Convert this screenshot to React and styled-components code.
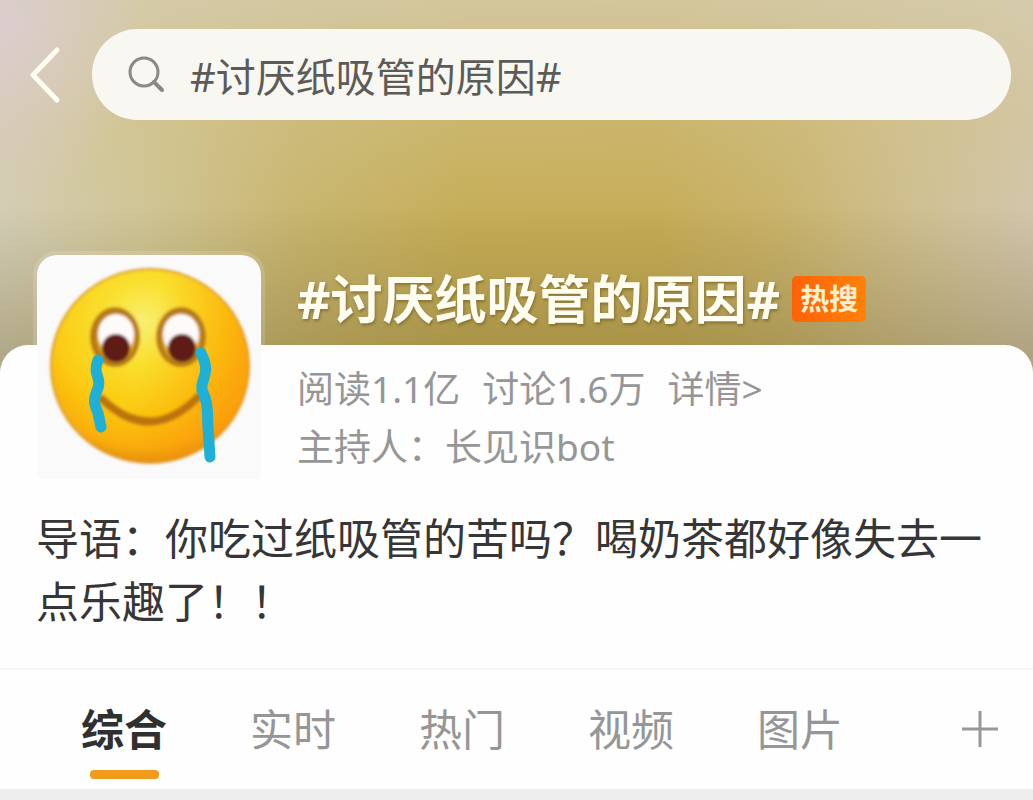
import React, { useState } from 'react'
import styled, { createGlobalStyle } from 'styled-components'

const GlobalStyle = createGlobalStyle`
  * {
    box-sizing: border-box;
  }

  body {
    margin: 0;
    background: #eeeeee;
    font-family: "Noto Sans", "Noto Sans CJK SC", sans-serif;
  }

  button, input {
    font: inherit;
    border: 0;
    padding: 0;
    background: none;
  }
`

const Hero = styled.header`
  display: flex;
  align-items: center;
  padding: 29px 22px 253px 26px;
  background:
    radial-gradient(ellipse 14% 50% at 0% 6%, rgba(221, 206, 216, 0.8), rgba(221, 206, 216, 0) 100%),
    linear-gradient(180deg, rgba(213, 203, 170, 0.85) 0%, rgba(211, 196, 142, 0.4) 32%, rgba(200, 176, 90, 0) 62%),
    linear-gradient(180deg, rgba(110, 95, 40, 0) 55%, rgba(110, 95, 40, 0.34) 95%),
    linear-gradient(90deg, #d4ceb8 0%, #d0c595 14%, #c8b56e 29%, #c5ad56 45%, #c5ac56 64%, #c9b36c 76%, #cfbf90 88%, #d2c6ae 100%);
`

const BackButton = styled.button`
  display: flex;
  margin-right: 28px;
  cursor: pointer;
`

const SearchBox = styled.label`
  display: flex;
  flex: 1;
  align-items: center;
  gap: 24px;
  height: 91px;
  padding: 0 36px;
  border-radius: 46px;
  background: #f9f7f1;
`

const SearchInput = styled.input`
  flex: 1;
  min-width: 0;
  height: 60px;
  font-size: 40px;
  color: #5c5b58;
  outline: none;
`

const Panel = styled.main`
  margin-top: -28px;
  border-radius: 28px 28px 0 0;
  background: #fefefe;
`

const Topic = styled.section`
  display: flex;
  gap: 36px;
  padding: 0 37px;
`

const Avatar = styled.div`
  flex: none;
  width: 224px;
  height: 224px;
  margin-top: -90px;
  border-radius: 20px 20px 4px 4px;
  background: #fafafa;
  box-shadow: 0 0 0 4px rgba(255, 255, 255, 0.14);

  svg {
    display: block;
  }
`

const TopicInfo = styled.div`
  flex: 1;
  min-width: 0;
  margin-top: -90px;
`

const TitleRow = styled.div`
  display: flex;
  align-items: center;
  gap: 12px;
  height: 88px;
  margin-bottom: 17px;
`

const Title = styled.h1`
  margin: 0;
  font-size: 52px;
  line-height: 64px;
  font-weight: 700;
  white-space: nowrap;
  color: #fffdf2;
  text-shadow: 1px 2px 3px rgba(90, 75, 20, 0.5);
`

const HotBadge = styled.span`
  padding: 0 8px;
  border-radius: 5px;
  font-size: 29px;
  line-height: 46px;
  font-weight: 700;
  white-space: nowrap;
  color: #fff0d0;
  background: linear-gradient(90deg, #ff6208, #ff8209);
`

const MetaLine = styled.div`
  display: flex;
  gap: 22px;
  font-size: 37px;
  line-height: 58px;
  white-space: nowrap;
  color: #969696;
`

const DetailLink = styled.a`
  color: inherit;
  text-decoration: none;
`

const Intro = styled.p`
  margin: 0;
  padding: 28px 36px 35px;
  border-bottom: 2px solid #f6f6f6;
  font-size: 43px;
  line-height: 63px;
  color: #363636;
`

const TabBar = styled.nav`
  display: flex;
  align-items: flex-start;
  justify-content: space-between;
  height: 119px;
  padding: 28px 34px 0 81px;
`

const TabList = styled.div`
  display: flex;
  gap: 83px;
`

const Tab = styled.button`
  display: flex;
  flex-direction: column;
  align-items: center;
  gap: 8px;
  font-size: 43px;
  line-height: 64px;
  font-weight: ${props => props.$active ? 700 : 400};
  white-space: nowrap;
  color: ${props => props.$active ? '#303030' : '#969696'};
  cursor: pointer;

  &::after {
    content: '';
    width: 69px;
    height: 9px;
    border-radius: 4px;
    background: ${props => props.$active ? '#f29a1c' : 'transparent'};
  }
`

const AddButton = styled.button`
  display: flex;
  align-items: center;
  height: 64px;
  cursor: pointer;
`

const BackIcon = () => (
  <svg width="38" height="60" viewBox="0 0 38 60" fill="none" stroke="#fffdf0" strokeWidth="5" strokeLinecap="round" strokeLinejoin="round">
    <path d="M31 5 7 30l24 25" />
  </svg>
)

const SearchIcon = () => (
  <svg width="38" height="38" viewBox="0 0 38 38" fill="none" stroke="#8a8986">
    <circle cx="16" cy="16" r="14" strokeWidth="3" />
    <path d="M26 26l8 8" strokeWidth="4" strokeLinecap="round" />
  </svg>
)

const PlusIcon = () => (
  <svg width="38" height="38" viewBox="0 0 38 38" stroke="#989898" strokeWidth="3">
    <path d="M1 18h36M19 0v36" />
  </svg>
)

const CryingFace = () => (
  <svg width="224" height="224" viewBox="0 0 224 224" fill="none" role="img" aria-label="笑着流泪">
    <defs>
      <radialGradient id="skin" cx="0.47" cy="0.27" r="0.74">
        <stop offset="0" stopColor="#f9ee72" />
        <stop offset="0.28" stopColor="#f9e02f" />
        <stop offset="0.62" stopColor="#fbca12" />
        <stop offset="0.88" stopColor="#f9ac0c" />
        <stop offset="1" stopColor="#dc8a14" />
      </radialGradient>
      <linearGradient id="cheek" x1="0" y1="0" x2="1" y2="0.3">
        <stop offset="0.55" stopColor="#ff9d00" stopOpacity="0" />
        <stop offset="1" stopColor="#fb9200" stopOpacity="0.5" />
      </linearGradient>
      <filter id="soft" x="-10%" y="-10%" width="120%" height="120%">
        <feGaussianBlur stdDeviation="1.6" />
      </filter>
    </defs>
    <g filter="url(#soft)">
      <ellipse cx="113" cy="111" rx="99" ry="97" fill="url(#skin)" stroke="#dc9a2c" strokeWidth="2" />
      <ellipse cx="113" cy="111" rx="99" ry="97" fill="url(#cheek)" />
      <g fill="#b87a18">
        <ellipse cx="78" cy="82" rx="25" ry="30" />
        <ellipse cx="144" cy="82" rx="25" ry="30" />
      </g>
      <g fill="#dfa62a">
        <ellipse cx="79" cy="83" rx="19" ry="24" />
        <ellipse cx="144" cy="83" rx="19" ry="24" />
      </g>
      <g fill="#fffafa">
        <ellipse cx="79" cy="79" rx="18" ry="20" />
        <ellipse cx="144" cy="79" rx="18" ry="20" />
      </g>
      <g fill="#5e1c12">
        <circle cx="79" cy="93" r="14" />
        <circle cx="145" cy="93" r="14" />
      </g>
      <path d="M65 144Q113 190 161 142" stroke="#bd730c" strokeWidth="8" strokeLinecap="round" />
    </g>
    <g stroke="#1fb0d8" strokeWidth="11" strokeLinecap="round" strokeLinejoin="round">
      <path d="M61 105C55 120 65 122 61 133C55 146 58 151 61 158L64 172" />
      <path d="M164 98C175 120 163 123 165 135C172 148 170 160 171 172L173 202" />
    </g>
  </svg>
)

const tabs = ['综合', '实时', '热门', '视频', '图片']

const App = () => {
  const [query, setQuery] = useState('#讨厌纸吸管的原因#')
  const [active, setActive] = useState(tabs[0])

  return (
    <>
      <GlobalStyle />
      <Hero>
        <BackButton type="button" aria-label="返回"><BackIcon /></BackButton>
        <SearchBox>
          <SearchIcon />
          <SearchInput type="text" aria-label="搜索" value={query} onChange={e => setQuery(e.target.value)} />
        </SearchBox>
      </Hero>
      <Panel>
        <Topic>
          <Avatar><CryingFace /></Avatar>
          <TopicInfo>
            <TitleRow>
              <Title>#讨厌纸吸管的原因#</Title>
              <HotBadge>热搜</HotBadge>
            </TitleRow>
            <MetaLine>
              <span>阅读1.1亿</span>
              <span>讨论1.6万</span>
              <DetailLink href="#detail">详情&gt;</DetailLink>
            </MetaLine>
            <MetaLine>主持人：长见识bot</MetaLine>
          </TopicInfo>
        </Topic>
        <Intro>导语：你吃过纸吸管的苦吗？喝奶茶都好像失去一点乐趣了！！</Intro>
        <TabBar>
          <TabList>
            {tabs.map(name => (
              <Tab key={name} type="button" $active={name === active} onClick={() => setActive(name)}>
                {name}
              </Tab>
            ))}
          </TabList>
          <AddButton type="button" aria-label="添加"><PlusIcon /></AddButton>
        </TabBar>
      </Panel>
    </>
  )
}

export default App
